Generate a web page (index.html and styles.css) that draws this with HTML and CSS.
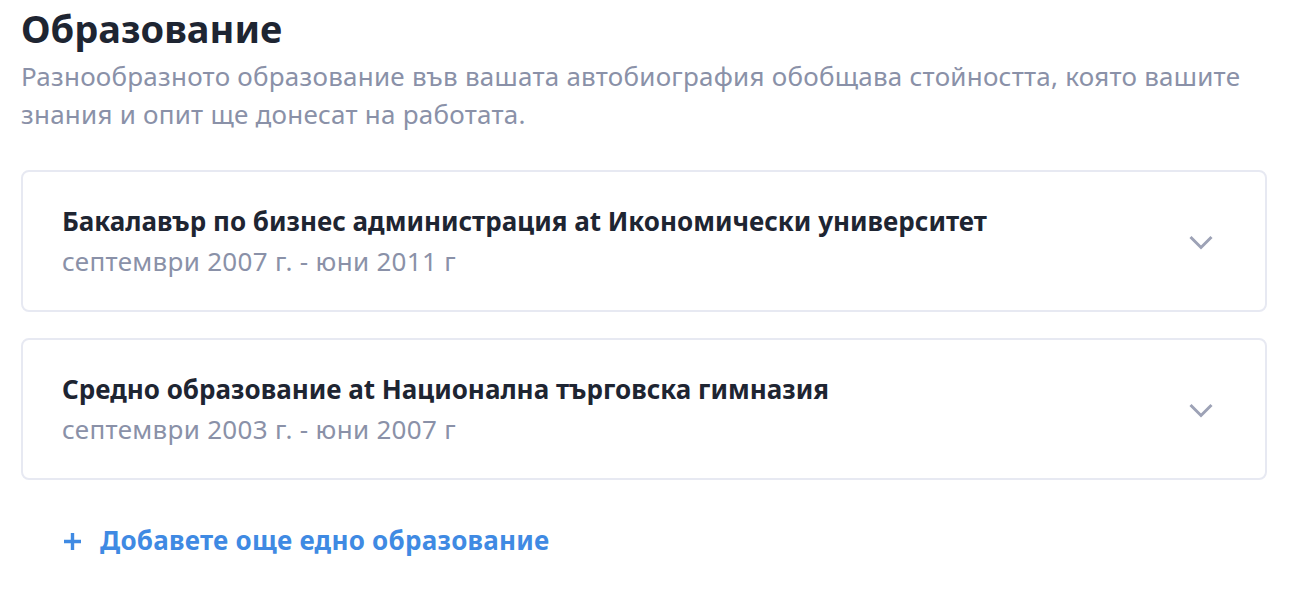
FILE: index.html
```html
<!DOCTYPE html>
<html lang="bg">
<head>
<meta charset="utf-8">
<link rel="stylesheet" href="styles.css">
</head>
<body>
<section class="section">
  <h1 class="title">Образование</h1>
  <p class="lead">Разнообразното образование във вашата автобиография обобщава стойността, която вашите знания и опит ще донесат на работата.</p>
  <div class="list">
    <div class="card">
      <div class="card-text">
        <div class="card-title">Бакалавър по бизнес администрация at Икономически университет</div>
        <div class="card-date">септември 2007 г. - юни 2011 г</div>
      </div>
      <svg class="chevron" width="24" height="18" viewBox="0 0 24 18"><path d="M1.5 3 L12 13.5 L22.5 3" fill="none" stroke="#9da2b6" stroke-width="3"/></svg>
    </div>
    <div class="card">
      <div class="card-text">
        <div class="card-title">Средно образование at Национална търговска гимназия</div>
        <div class="card-date">септември 2003 г. - юни 2007 г</div>
      </div>
      <svg class="chevron" width="24" height="18" viewBox="0 0 24 18"><path d="M1.5 3 L12 13.5 L22.5 3" fill="none" stroke="#9da2b6" stroke-width="3"/></svg>
    </div>
  </div>
  <a class="add" href="#">
    <svg class="plus" width="19" height="19" viewBox="0 0 19 19"><path d="M9.5 1 V18 M1 9.5 H18" stroke="#3f8ae3" stroke-width="3.4" fill="none"/></svg>
    <span>Добавете още едно образование</span>
  </a>
</section>
</body>
</html>
```
FILE: styles.css
```css
* { box-sizing: border-box; }
html, body { margin: 0; padding: 0; background: #fff; }
body { font-family: "Noto Sans", "Open Sans", sans-serif; }
.section { padding: 2px 39px 0 21px; }
.title {
  margin: 0;
  font-size: 38px;
  line-height: 52px;
  font-weight: 700;
  color: #1e2532;
}
.lead {
  margin: 3px 0 0;
  font-size: 26px;
  line-height: 38px;
  letter-spacing: 0.24px;
  color: #8a91a8;
  max-width: 1250px;
}
.list {
  margin-top: 37px;
  display: flex;
  flex-direction: column;
  gap: 26px;
}
.card {
  height: 142px;
  border: 2px solid #e7e9f2;
  border-radius: 8px;
  display: flex;
  align-items: center;
  padding: 0 52px 0 39px;
}
.card-text { flex: 1; }
.card-title {
  font-size: 26px;
  line-height: 40px;
  font-weight: 700;
  color: #1e2532;
}
.card-date {
  font-size: 26px;
  line-height: 40px;
  letter-spacing: 0.3px;
  color: #8a91a8;
}
.chevron { display: block; margin-top: 4px; }
.add {
  display: flex;
  align-items: center;
  gap: 18px;
  margin: 40px 0 0 42px;
  text-decoration: none;
  color: #3f8ae3;
  font-size: 26px;
  font-weight: 700;
  line-height: 40px;
  letter-spacing: 0.25px;
}
.plus { display: block; margin-top: 2px; }
```
